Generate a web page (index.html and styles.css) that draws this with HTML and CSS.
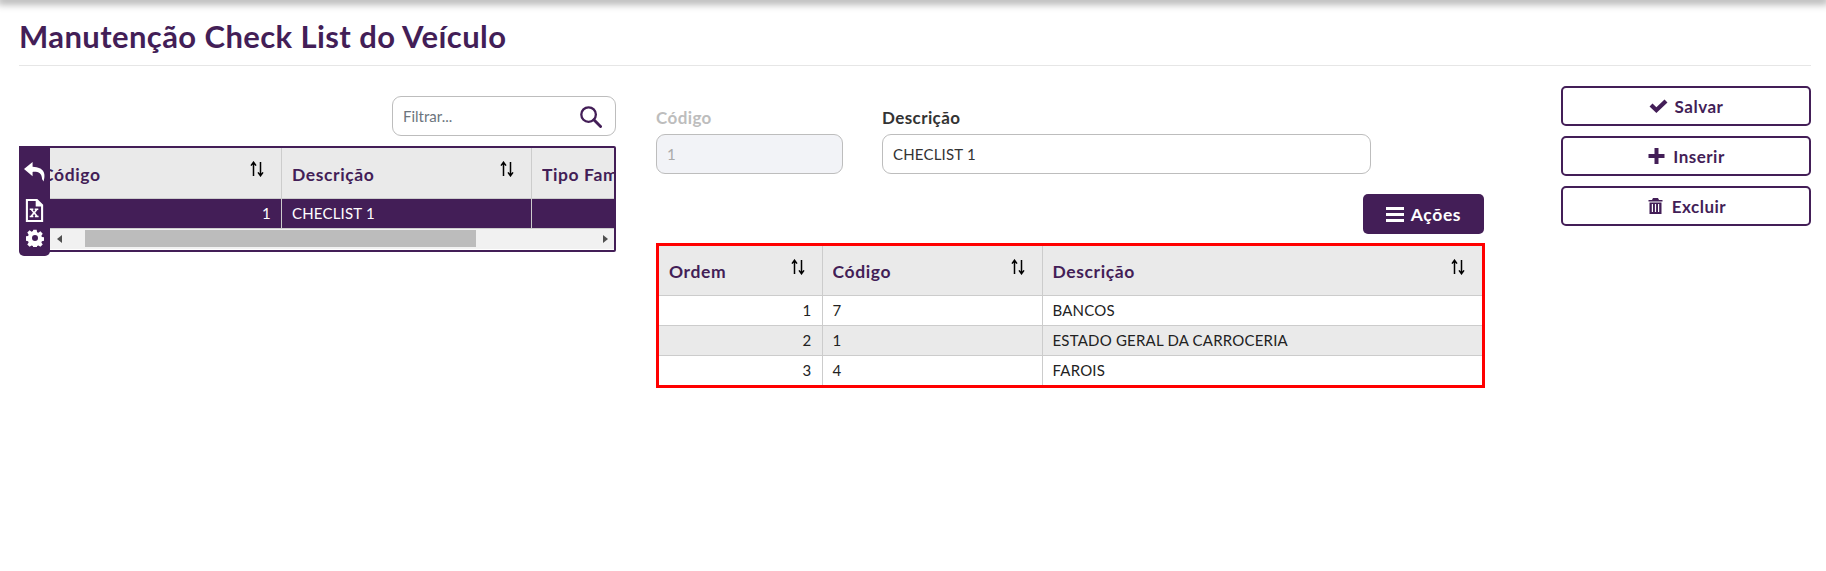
FILE: index.html
```html
<!DOCTYPE html>
<html lang="pt-BR">
<head>
<meta charset="utf-8">
<title>Manutenção Check List do Veículo</title>
<link rel="stylesheet" href="styles.css">
</head>
<body>
<div class="topbar"></div>
<main class="page">
  <h1 class="title">Manutenção Check List do Veículo</h1>
  <div class="content">
    <section class="left">
      <div class="filter">
        <span class="filter-text">Filtrar...</span>
        <svg class="search-icon" viewBox="0 0 24 24"><circle cx="10" cy="10" r="7.6" fill="none" stroke="currentColor" stroke-width="2.4"/><path d="M15.5 15.5l7 7" stroke="currentColor" stroke-width="3" stroke-linecap="round"/></svg>
      </div>
      <div class="grid-box">
        <div class="grid-clip">
          <table class="grid grid-left">
            <colgroup><col class="c250"><col class="c250"><col class="c250"></colgroup>
            <thead><tr>
              <th><div class="th-in"><span>Código</span><svg class="sort" viewBox="0 0 14 16"><path d="M3.500 15V2M1 4.600L3.500 1.200 6 4.600" fill="none" stroke="#000" stroke-width="1.500"/><path d="M10.500 1v13M8 11.400l2.500 3.400 2.500-3.400" fill="none" stroke="#000" stroke-width="1.500"/></svg></div></th>
              <th><div class="th-in"><span>Descrição</span><svg class="sort" viewBox="0 0 14 16"><path d="M3.500 15V2M1 4.600L3.500 1.200 6 4.600" fill="none" stroke="#000" stroke-width="1.500"/><path d="M10.500 1v13M8 11.400l2.500 3.400 2.500-3.400" fill="none" stroke="#000" stroke-width="1.500"/></svg></div></th>
              <th><div class="th-in"><span>Tipo Família</span></div></th>
            </tr></thead>
            <tbody><tr class="selected"><td class="num">1</td><td>CHECLIST 1</td><td></td></tr></tbody>
          </table>
          <div class="hscroll">
            <span class="arrow-l"></span>
            <span class="thumb"></span>
            <span class="arrow-r"></span>
          </div>
        </div>
        <div class="side-tools">
          <svg class="tool-reply" viewBox="0 0 24 22"><path d="M10 1L1 8.500 10 16v-4.600c6-.4 9.500 1.300 10 7.600l1.500 2.500c2.500-8 1-15-11.500-15.500z" fill="#fff"/></svg>
          <svg class="tool-excel" viewBox="0 0 20 24"><path d="M2 1h10.500L18 6.500V23H2z" fill="none" stroke="#fff" stroke-width="2.200"/><path d="M12 1v6h6" fill="#fff" stroke="#fff" stroke-width="1.500"/><path d="M5 10h3.800v1.400h-.6l1.300 1.800 1.300-1.800h-.6V10h3.800v1.400h-.9l-2.300 3 2.500 3.200h1V19h-3.900v-1.400h.7l-1.500-2-1.500 2h.7V19H4.900v-1.400h1l2.500-3.200-2.300-3H5z" fill="#fff"/></svg>
          <svg class="tool-gear" viewBox="0 0 24 24"><path fill-rule="evenodd" fill="#fff" d="M9.800 1h4.400l.6 3.200 1.700.7 2.700-1.800 3.100 3.100-1.800 2.700.7 1.700 3.200.6v4.400l-3.200.6-.7 1.700 1.800 2.700-3.100 3.100-2.700-1.800-1.700.7-.6 3.200H9.800l-.6-3.200-1.700-.7-2.700 1.800-3.100-3.100 1.800-2.700-.7-1.700-3.200-.6V9.800l3.200-.6.7-1.700-1.800-2.700 3.100-3.100 2.700 1.800 1.700-.7zM12 8a4 4 0 1 0 0 8 4 4 0 0 0 0-8z"/></svg>
        </div>
      </div>
    </section>

    <section class="middle">
      <div class="fields">
        <div class="field field-code">
          <label class="label label-off">Código</label>
          <div class="input input-off">1</div>
        </div>
        <div class="field field-desc">
          <label class="label">Descrição</label>
          <div class="input">CHECLIST 1</div>
        </div>
      </div>
      <div class="actions-row">
        <button class="btn-actions"><svg class="icon-bars" viewBox="0 0 18 15"><path d="M0 0h18v3H0zM0 6h18v3H0zM0 12h18v3H0z" fill="#fff"/></svg>Ações</button>
      </div>
      <div class="red-box">
        <table class="grid">
          <colgroup><col class="c166"><col class="c220"><col></colgroup>
          <thead><tr>
            <th><div class="th-in"><span>Ordem</span><svg class="sort" viewBox="0 0 14 16"><path d="M3.500 15V2M1 4.600L3.500 1.200 6 4.600" fill="none" stroke="#000" stroke-width="1.500"/><path d="M10.500 1v13M8 11.400l2.500 3.400 2.500-3.400" fill="none" stroke="#000" stroke-width="1.500"/></svg></div></th>
            <th><div class="th-in"><span>Código</span><svg class="sort" viewBox="0 0 14 16"><path d="M3.500 15V2M1 4.600L3.500 1.200 6 4.600" fill="none" stroke="#000" stroke-width="1.500"/><path d="M10.500 1v13M8 11.400l2.500 3.400 2.500-3.400" fill="none" stroke="#000" stroke-width="1.500"/></svg></div></th>
            <th><div class="th-in"><span>Descrição</span><svg class="sort" viewBox="0 0 14 16"><path d="M3.500 15V2M1 4.600L3.500 1.200 6 4.600" fill="none" stroke="#000" stroke-width="1.500"/><path d="M10.500 1v13M8 11.400l2.500 3.400 2.500-3.400" fill="none" stroke="#000" stroke-width="1.500"/></svg></div></th>
          </tr></thead>
          <tbody>
            <tr><td class="num">1</td><td>7</td><td>BANCOS</td></tr>
            <tr class="alt"><td class="num">2</td><td>1</td><td>ESTADO GERAL DA CARROCERIA</td></tr>
            <tr><td class="num">3</td><td>4</td><td>FAROIS</td></tr>
          </tbody>
        </table>
      </div>
    </section>

    <aside class="right">
      <button class="btn"><svg class="btn-icon" viewBox="0 0 18 14"><path d="M.5 7.500l2.800-2.800L7 8.200 14.700.8l2.800 2.800L7 13.600z" fill="currentColor"/></svg>Salvar</button>
      <button class="btn"><svg class="btn-icon" viewBox="0 0 16 16"><path d="M6 0h4v6h6v4h-6v6H6v-6H0V6h6z" fill="currentColor"/></svg>Inserir</button>
      <button class="btn"><svg class="btn-icon" viewBox="0 0 14 16"><path fill-rule="evenodd" fill="currentColor" d="M4.500 0h5l1 2H14v1.500H0V2h3.500zM1 4.500h12V16H1zM3.300 6v8h1.200V6zM6.400 6v8h1.200V6zM9.500 6v8h1.200V6z"/></svg>Excluir</button>
    </aside>
  </div>
</main>
</body>
</html>
```
FILE: styles.css
```css
* { box-sizing: border-box; }
html, body { margin: 0; padding: 0; }
body {
  background: #fff;
  font-family: "Lato", "Noto Sans", sans-serif;
  color: #222;
  height: 571px;
  overflow: hidden;
}
.topbar {
  height: 0;
  box-shadow: 0 0 8px 3px rgba(0, 0, 0, .45);
}
.page { padding: 0 15px 0 19px; }
.title {
  margin: 0;
  height: 66px;
  padding-top: 17px;
  border-bottom: 1px solid #e6e6e6;
  color: #431e57;
  font-size: 31px;
  line-height: 38px;
  font-weight: 700;
  letter-spacing: .4px;
}
.content {
  display: flex;
  align-items: flex-start;
  margin-top: 20px;
}
.left { width: 597px; flex: none; padding-top: 10px; margin-right: 40px; }
.filter {
  margin-left: auto;
  width: 224px;
  height: 40px;
  border: 1px solid #bdbdbd;
  border-radius: 9px;
  display: flex;
  align-items: center;
  justify-content: space-between;
  padding: 0 13px 0 10px;
  margin-bottom: 10px;
}
.filter-text { font-size: 15px; color: #6c757d; }
.search-icon { width: 23px; height: 23px; color: #431e57; }
.grid-box {
  position: relative;
  height: 106px;
  border: 2px solid #431e57;
  border-radius: 2px;
}
.grid-clip { overflow: hidden; height: 102px; }
.grid {
  border-collapse: collapse;
  table-layout: fixed;
  width: 100%;
  font-size: 15px;
  letter-spacing: .2px;
}
.grid-left { width: 750px; margin-left: 10px; }
.c250 { width: 250px; }
.c166 { width: 163px; }
.c220 { width: 220px; }
.grid th {
  height: 49px;
  background: #eaeaea;
  border: 1px solid #ccc;
  border-top: 0;
  padding: 0 10px;
  text-align: left;
  color: #431e57;
  font-size: 17.500px;
  letter-spacing: .6px;
  font-weight: 700;
  white-space: nowrap;
}
.grid-left th { height: 50px; }
.th-in { display: flex; justify-content: space-between; align-items: center; overflow: hidden; }
.th-in span { padding-top: 3px; }
.sort { width: 14px; height: 16px; flex: none; margin: -7px 7px 0 0; }
.grid td {
  height: 30px;
  border: 1px solid #ccc;
  padding: 0 10px;
  white-space: nowrap;
  overflow: hidden;
}
.grid .num { text-align: right; }
.grid tr.alt td { background: #eaeaea; }
.grid tr.selected td { background: #431e57; color: #fff; }
.hscroll {
  height: 20px;
  margin-left: 29px;
  background: #f1f1f1;
  display: flex;
  align-items: center;
  padding: 0 6px 0 7px;
}
.arrow-l {
  border-style: solid;
  border-width: 4.500px 5px 4.500px 0;
  border-color: transparent #505050 transparent transparent;
}
.arrow-r {
  border-style: solid;
  border-width: 4.500px 0 4.500px 5px;
  border-color: transparent transparent transparent #505050;
  margin-left: auto;
}
.thumb { width: 391px; height: 17px; margin-left: 23px; background: #bcbcbc; }
.side-tools {
  position: absolute;
  left: -2px;
  top: -2px;
  width: 31px;
  height: 110px;
  background: #431e57;
  border-radius: 0 0 5px 5px;
  display: flex;
  flex-direction: column;
  align-items: center;
}
.tool-reply { width: 23px; height: 21px; margin-top: 15px; }
.tool-excel { width: 19px; height: 23px; margin-top: 17px; }
.tool-gear { width: 18px; height: 18px; margin-top: 7px; }

.middle { width: 829px; flex: none; margin-right: 76px; padding-top: 22px; }
.fields { display: flex; }
.field-code { width: 187px; margin-right: 39px; }
.field-desc { width: 489px; }
.label {
  display: block;
  height: 26px;
  font-size: 17px;
  line-height: 20px;
  font-weight: 700;
  letter-spacing: .4px;
  color: #333;
}
.label-off { color: #bdbdbd; }
.input {
  height: 40px;
  border: 1px solid #bdbdbd;
  border-radius: 9px;
  padding: 0 10px;
  display: flex;
  align-items: center;
  font-size: 15px;
  letter-spacing: .2px;
  color: #333;
}
.input-off { background: #f2f3f7; color: #aaa; }
.actions-row { display: flex; justify-content: flex-end; margin-top: 20px; padding-right: 1px; }
.btn-actions {
  width: 121px;
  height: 40px;
  border: 0;
  border-radius: 5px;
  background: #431e57;
  color: #fff;
  font: 700 17.500px "Lato", sans-serif;
  letter-spacing: .6px;
  display: flex;
  align-items: center;
  justify-content: center;
}
.icon-bars { width: 18px; height: 15px; margin-right: 7px; }
.red-box {
  margin-top: 9px;
  border: 3px solid #f00;
  height: 145px;
  overflow: hidden;
}
.red-box .grid td { height: 30px; }
.red-box .grid tr:last-child td { border-bottom: 0; }
.red-box .grid th:first-child, .red-box .grid td:first-child { border-left: 0; }
.red-box .grid th:last-child, .red-box .grid td:last-child { border-right: 0; }

.right { width: 250px; flex: none; display: flex; flex-direction: column; gap: 10px; }
.btn {
  height: 40px;
  border: 2px solid #431e57;
  border-radius: 5px;
  background: #fff;
  color: #431e57;
  font: 700 17px "Lato", sans-serif;
  letter-spacing: .5px;
  display: flex;
  align-items: center;
  justify-content: center;
}
.btn-icon { height: 16px; width: 19px; margin-right: 7px; }
```
